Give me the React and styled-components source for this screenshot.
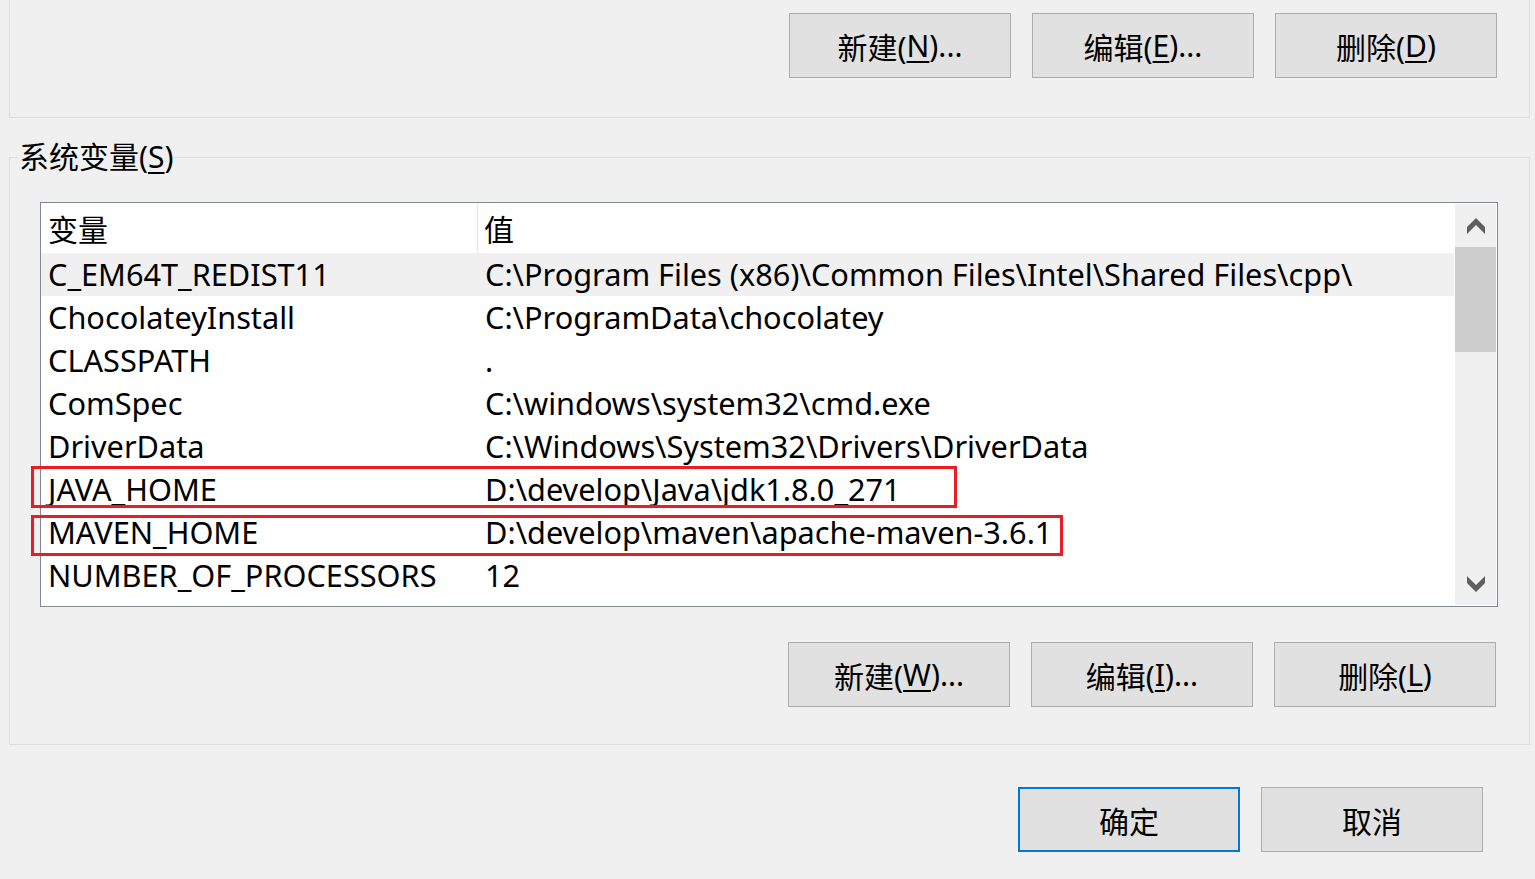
import React from 'react'
import styled, { createGlobalStyle } from 'styled-components'

const GlobalStyle = createGlobalStyle`
  html, body {
    margin: 0;
    padding: 0;
    background: #f0f0f0;
  }
  body {
    font-family: "Noto Sans", "Noto Sans CJK SC", sans-serif;
    color: #000;
    overflow: hidden;
  }
`

const Page = styled.div`
  width: 1535px;
  height: 879px;
  box-sizing: border-box;
  padding-left: 9px;
  background: #f0f0f0;
`

const UserGroup = styled.div`
  width: 1521px;
  box-sizing: border-box;
  border: 1px solid #dcdcdc;
  border-top: none;
  padding: 13px 32px 39px 0;
  display: flex;
  justify-content: flex-end;
  gap: 21px;
`

const SystemGroup = styled.fieldset`
  width: 1521px;
  min-width: 0;
  box-sizing: border-box;
  margin: 21px 0 0 0;
  padding: 27px 31px 37px 30px;
  border: 1px solid #dcdcdc;
`

const Legend = styled.legend`
  margin-left: -22px;
  padding: 0 1px;
  font-size: 30px;
  line-height: 36px;
`

const Key = styled.u`
  text-decoration-thickness: 2px;
  text-underline-offset: 4px;
`

const Button = styled.button`
  width: 222px;
  height: 65px;
  box-sizing: border-box;
  margin: 0;
  padding: 0;
  background: #e1e1e1;
  border: ${p => (p.$default ? '2px solid #0078d7' : '1px solid #adadad')};
  font-family: inherit;
  font-size: 30px;
  color: #000;
  display: flex;
  align-items: center;
  justify-content: center;
`

const ButtonRow = styled.div`
  display: flex;
  justify-content: flex-end;
  gap: 21px;
  margin-top: ${p => p.$top || 0}px;
  margin-right: ${p => p.$right || 0}px;
`

const ListWrap = styled.div`
  position: relative;
  width: 1458px;
`

const ListView = styled.div`
  width: 1458px;
  height: 405px;
  box-sizing: border-box;
  border: 1px solid #828790;
  background: #fff;
  display: flex;
  overflow: hidden;
`

const Table = styled.div`
  flex: 1;
  display: flex;
  flex-direction: column;
`

const HeaderRow = styled.div`
  display: grid;
  grid-template-columns: 437px 1fr;
  height: 50px;
  font-size: 30px;
  line-height: 54px;
`

const HeaderCell = styled.div`
  padding-left: ${p => (p.$first ? 7 : 6)}px;
  border-right: ${p => (p.$first ? '1px solid #e5e5e5' : 'none')};
  white-space: nowrap;
`

const Row = styled.div`
  display: grid;
  grid-template-columns: 437px 1fr;
  height: 43px;
  background: ${p => (p.$hot ? '#f0f0f0' : '#fff')};
  font-size: 30.7px;
  line-height: 43px;
`

const Cell = styled.div`
  padding-left: 7px;
  white-space: nowrap;
  overflow: hidden;
`

const ScrollBar = styled.div`
  width: 41px;
  margin: 1px;
  background: #f0f0f0;
  display: flex;
  flex-direction: column;
`

const ArrowButton = styled.div`
  height: 43px;
  display: flex;
  align-items: center;
  justify-content: center;
`

const Thumb = styled.div`
  height: 105px;
  background: #cdcdcd;
`

const Track = styled.div`
  flex: 1;
`

const Mark = styled.div`
  position: absolute;
  left: -9px;
  top: ${p => p.$top}px;
  width: ${p => p.$width}px;
  height: ${p => p.$height}px;
  box-sizing: border-box;
  border: 3px solid #ec1c24;
  pointer-events: none;
`

const Chevron = ({ down }) => (
  <svg width="18" height="16" viewBox="0 0 18 16" style={{ transform: down ? 'rotate(180deg)' : 'none' }}>
    <polygon points="9,0 18,9 18,16 9,7 0,16 0,9" fill="#606060" />
  </svg>
)

const rows = [
  ['C_EM64T_REDIST11', 'C:\\Program Files (x86)\\Common Files\\Intel\\Shared Files\\cpp\\'],
  ['ChocolateyInstall', 'C:\\ProgramData\\chocolatey'],
  ['CLASSPATH', '.'],
  ['ComSpec', 'C:\\windows\\system32\\cmd.exe'],
  ['DriverData', 'C:\\Windows\\System32\\Drivers\\DriverData'],
  ['JAVA_HOME', 'D:\\develop\\Java\\jdk1.8.0_271'],
  ['MAVEN_HOME', 'D:\\develop\\maven\\apache-maven-3.6.1'],
  ['NUMBER_OF_PROCESSORS', '12'],
]

const App = () => {
  return (
    <Page>
      <GlobalStyle />
      <UserGroup>
        <Button>新建(<Key>N</Key>)...</Button>
        <Button>编辑(<Key>E</Key>)...</Button>
        <Button>删除(<Key>D</Key>)</Button>
      </UserGroup>

      <SystemGroup>
        <Legend>系统变量(<Key>S</Key>)</Legend>
        <ListWrap>
          <ListView>
            <Table>
              <HeaderRow>
                <HeaderCell $first>变量</HeaderCell>
                <HeaderCell>值</HeaderCell>
              </HeaderRow>
              {rows.map(([name, value], i) => (
                <Row key={name} $hot={i === 0}>
                  <Cell>{name}</Cell>
                  <Cell>{value}</Cell>
                </Row>
              ))}
            </Table>
            <ScrollBar>
              <ArrowButton><Chevron /></ArrowButton>
              <Thumb />
              <Track />
              <ArrowButton><Chevron down /></ArrowButton>
            </ScrollBar>
          </ListView>
          <Mark $top={264} $width={926} $height={42} />
          <Mark $top={313} $width={1032} $height={41} />
        </ListWrap>
        <ButtonRow $top={35} $right={2}>
          <Button>新建(<Key>W</Key>)...</Button>
          <Button>编辑(<Key>I</Key>)...</Button>
          <Button>删除(<Key>L</Key>)</Button>
        </ButtonRow>
      </SystemGroup>

      <ButtonRow $top={42} $right={52}>
        <Button $default>确定</Button>
        <Button>取消</Button>
      </ButtonRow>
    </Page>
  )
}

export default App
